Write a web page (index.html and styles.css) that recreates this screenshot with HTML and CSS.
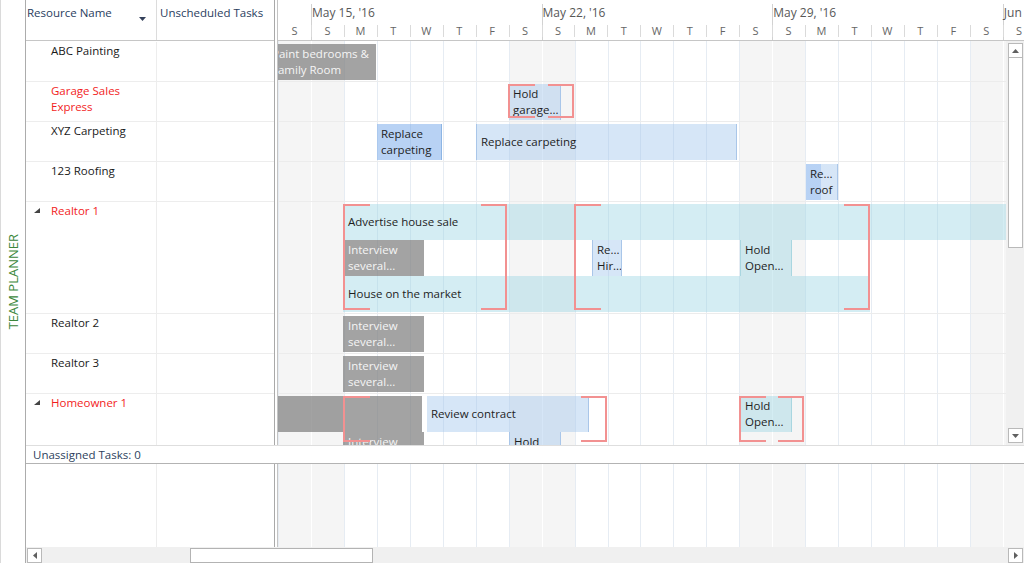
FILE: index.html
```html
<!DOCTYPE html>
<html lang="en">
<head>
<meta charset="utf-8">
<title>Team Planner</title>
<link rel="stylesheet" href="styles.css">
</head>
<body>
<div class="app">
  <aside class="side"><span class="side-label">TEAM PLANNER</span></aside>
  <div class="main">
    <div class="top">
      <div class="table">
        <div class="thead">
          <div class="th th-name">Resource Name
            <svg class="sort" width="8" height="4" viewBox="0 0 8 4"><polygon points="0,0 7,0 3.5,4" fill="#34405a"/></svg>
          </div>
          <div class="th th-uns">Unscheduled Tasks</div>
        </div>
        <div class="tbody">
          <div class="tr"><div class="td name">ABC Painting</div><div class="td uns"></div></div>
          <div class="tr"><div class="td name red">Garage Sales<br>Express</div><div class="td uns"></div></div>
          <div class="tr"><div class="td name">XYZ Carpeting</div><div class="td uns"></div></div>
          <div class="tr"><div class="td name">123 Roofing</div><div class="td uns"></div></div>
          <div class="tr tall"><div class="td name red"><svg class="twisty" width="6" height="6" viewBox="0 0 6 6"><polygon points="6,0 6,5 0,5" fill="#444"/></svg>Realtor 1</div><div class="td uns"></div></div>
          <div class="tr"><div class="td name">Realtor 2</div><div class="td uns"></div></div>
          <div class="tr"><div class="td name">Realtor 3</div><div class="td uns"></div></div>
          <div class="tr last"><div class="td name red"><svg class="twisty" width="6" height="6" viewBox="0 0 6 6"><polygon points="6,0 6,5 0,5" fill="#444"/></svg>Homeowner 1</div><div class="td uns"></div></div>
        </div>
      </div>
      <div class="splitter"></div>
      <div class="chart">
        <div class="chead">
          <div class="months">
            <div class="m-lead"></div>
            <div class="month">May 15, '16</div>
            <div class="month">May 22, '16</div>
            <div class="month">May 29, '16</div>
            <div class="month">Jun</div>
          </div>
          <div class="days">
            <div class="day">S</div>
            <div class="day wk">S</div><div class="day">M</div><div class="day">T</div><div class="day">W</div><div class="day">T</div><div class="day">F</div><div class="day">S</div>
            <div class="day wk">S</div><div class="day">M</div><div class="day">T</div><div class="day">W</div><div class="day">T</div><div class="day">F</div><div class="day">S</div>
            <div class="day wk">S</div><div class="day">M</div><div class="day">T</div><div class="day">W</div><div class="day">T</div><div class="day">F</div><div class="day">S</div>
            <div class="day wk">S</div>
          </div>
        </div>
        <div class="cbody">
          <div class="canvas grid-bg">
            <div class="crow">
              <div class="bar gray" style="left:-11px;width:109px;top:2px">Paint bedrooms &amp;<br>Family Room</div>
            </div>
            <div class="crow">
              <div class="bar blue" style="left:231px;width:52px;top:2px">Hold<br>garage...</div>
              <div class="bracket" style="left:230px;width:66px;top:2px;height:34px"></div>
            </div>
            <div class="crow">
              <div class="bar dblue" style="left:99px;width:65px;top:2px">Replace<br>carpeting</div>
              <div class="bar blue lb one" style="left:198px;width:261px;top:2px">Replace carpeting</div>
            </div>
            <div class="crow">
              <div class="bar split" style="left:528px;width:32px;top:2px">Re...<br>roof</div>
            </div>
            <div class="crow tall">
              <div class="bar teal one" style="left:65px;width:720px;top:2px">Advertise house sale</div>
              <div class="bar gray" style="left:65px;width:81px;top:38px">Interview<br>several...</div>
              <div class="bar blue lb" style="left:314px;width:30px;top:38px">Re...<br>Hir...</div>
              <div class="bar teal tb" style="left:462px;width:52px;top:38px">Hold<br>Open...</div>
              <div class="bar teal one" style="left:65px;width:527px;top:74px">House on the market</div>
              <div class="bracket" style="left:65px;width:164px;top:2px;height:106px"></div>
              <div class="bracket" style="left:296px;width:296px;top:2px;height:106px"></div>
            </div>
            <div class="crow">
              <div class="bar gray" style="left:65px;width:81px;top:2px">Interview<br>several...</div>
            </div>
            <div class="crow">
              <div class="bar gray" style="left:65px;width:81px;top:2px">Interview<br>several...</div>
            </div>
            <div class="crow last">
              <div class="bar gray" style="left:-10px;width:154px;top:2px"></div>
              <div class="bar blue one" style="left:149px;width:162px;top:2px">Review contract</div>
              <div class="bar teal tb" style="left:462px;width:52px;top:2px">Hold<br>Open...</div>
              <div class="bar gray" style="left:65px;width:81px;top:38px">Interview<br>several...</div>
              <div class="bar blue lb" style="left:231px;width:52px;top:38px">Hold<br>garage...</div>
              <div class="bracket" style="left:65px;width:264px;top:2px;height:46px"></div>
              <div class="bracket" style="left:461px;width:65px;top:2px;height:46px"></div>
            </div>
          </div>
          <div class="vscroll">
            <div class="sbtn"><svg width="7" height="4" viewBox="0 0 7 4"><polygon points="0,4 7,4 3.5,0" fill="#606060"/></svg></div>
            <div class="vthumb"></div>
            <div class="sbtn down"><svg width="7" height="4" viewBox="0 0 7 4"><polygon points="0,0 7,0 3.5,4" fill="#606060"/></svg></div>
          </div>
        </div>
      </div>
    </div>
    <div class="unassigned">Unassigned Tasks: 0</div>
    <div class="bottom">
      <div class="btable"><div class="bname"></div><div class="buns"></div></div>
      <div class="splitter"></div>
      <div class="bcanvas grid-bg"></div>
    </div>
    <div class="hscroll">
      <div class="sbtn"><svg width="4" height="7" viewBox="0 0 4 7"><polygon points="4,0 4,7 0,3.5" fill="#606060"/></svg></div>
      <div class="hthumb"></div>
      <div class="sbtn right"><svg width="4" height="7" viewBox="0 0 4 7"><polygon points="0,0 0,7 4,3.5" fill="#606060"/></svg></div>
    </div>
  </div>
</div>
</body>
</html>
```

FILE: styles.css
```css
* { box-sizing: border-box; }
html, body { margin: 0; padding: 0; }
body {
  width: 1024px;
  height: 563px;
  overflow: hidden;
  background: #fff;
  font-family: "Open Sans", "Noto Sans", sans-serif;
  font-size: 11.5px;
  color: #1a1a1a;
}
.app { display: flex; height: 563px; }

.side {
  width: 26px;
  flex: none;
  border-left: 1px solid #dadada;
  border-right: 1px solid #acacac;
  display: flex;
  align-items: center;
  justify-content: center;
}
.side-label {
  writing-mode: vertical-rl;
  transform: rotate(180deg);
  font-size: 13px;
  color: #3b873b;
  white-space: nowrap;
}

.main { flex: 1; min-width: 0; display: flex; flex-direction: column; }
.top { height: 445px; flex: none; display: flex; }

/* left table */
.table { width: 248px; flex: none; display: flex; flex-direction: column; }
.thead { height: 41px; flex: none; display: flex; border-bottom: 1px solid #c6c6c6; }
.th { color: #2a3d5e; padding-top: 5px; line-height: 16px; white-space: nowrap; }
.th-name { width: 131px; padding-left: 1px; border-right: 1px solid #dcdcdc; position: relative; }
.sort { position: absolute; left: 113px; top: 17px; }
.th-uns { flex: 1; padding-left: 3px; }
.tbody { flex: 1; padding-top: 1px; overflow: hidden; }
.tr { display: flex; height: 40px; border-bottom: 1px solid #ededed; }
.tr.tall { height: 112px; }
.tr.last { height: 60px; border-bottom: none; }
.td { line-height: 16px; padding-top: 1px; white-space: nowrap; }
.td.name { width: 131px; padding-left: 25px; border-right: 1px solid #ededed; position: relative; }
.td.uns { flex: 1; }
.red { color: #f21d1d; }
.twisty { position: absolute; left: 8px; top: 6px; }

.splitter {
  width: 4px;
  flex: none;
  border-left: 1px solid #a9a9a9;
  border-right: 1px solid #c4c4c4;
  background: #fff;
}

/* chart */
.chart { flex: 1; min-width: 0; display: flex; flex-direction: column; }
.chead { height: 41px; flex: none; overflow: hidden; border-bottom: 1px solid #c6c6c6; }
.months { display: flex; height: 20px; }
.m-lead { width: 32.95px; flex: none; }
.month {
  width: 230.65px;
  flex: none;
  margin-top: 4px;
  height: 16px;
  padding-left: 1px;
  box-shadow: inset 1px 0 0 #d2d2d2;
  font-size: 12px;
  line-height: 18px;
  color: #575757;
  white-space: nowrap;
}
.days { display: flex; height: 20px; }
.day {
  width: 32.95px;
  flex: none;
  position: relative;
  text-align: center;
  font-size: 11px;
  line-height: 22px;
  color: #666;
}
.day::before {
  content: "";
  position: absolute;
  left: 0;
  top: 5px;
  bottom: 3px;
  width: 1px;
  background: #dadada;
}
.day.wk { box-shadow: inset 1px 0 0 #d2d2d2; }
.day:first-child::before { display: none; }

.cbody { flex: 1; min-height: 0; display: flex; }
.grid-bg {
  background-color: #fff;
  background-image:
    repeating-linear-gradient(90deg, transparent 0 1px, #f5f5f5 1px 32.95px, #ffffff 32.95px 33.95px, #f5f5f5 33.95px 65.9px, transparent 65.9px 230.65px),
    repeating-linear-gradient(90deg, #e6ecf3 0 1px, transparent 1px 32.95px);
}
.canvas { flex: 1; min-width: 0; overflow: hidden; padding-top: 1px; }
.crow { position: relative; height: 40px; border-bottom: 1px solid #ececec; }
.crow.tall { height: 112px; }
.crow.last { height: 60px; border-bottom: none; }

.bar {
  position: absolute;
  height: 36px;
  padding: 2px 2px 0 4px;
  line-height: 16px;
  white-space: nowrap;
  overflow: hidden;
  color: #1e1e1e;
}
.bar.one { padding-top: 0; line-height: 36px; }
.gray { background: rgba(128, 128, 128, 0.72); color: #f5f5f5; padding-left: 5px; }
.blue { background: rgba(160, 196, 236, 0.43); border-right: 1px solid #a9c6e9; }
.blue.lb { border-left: 1px solid #a9c6e9; }
.dblue { background: rgba(120, 170, 235, 0.53); border-right: 1px solid #8db5e4; }
.teal { background: rgba(160, 215, 228, 0.45); padding-left: 5px; }
.teal.tb { border-left: 1px solid #a9d6e0; border-right: 1px solid #a9d6e0; padding-left: 4px; }
.split {
  background: linear-gradient(90deg, rgba(120, 170, 235, 0.53) 0 15px, rgba(160, 196, 236, 0.43) 15px);
  border-right: 1px solid #a9c6e9;
}
.bracket { position: absolute; pointer-events: none; }
.bracket::before,
.bracket::after {
  content: "";
  position: absolute;
  top: 0;
  bottom: 0;
  border: 2px solid #f29191;
}
.bracket::before { left: 0; width: 25px; border-right: none; }
.bracket::after { right: 0; width: 24px; border-left: none; }

/* scrollbars */
.vscroll {
  width: 18px;
  flex: none;
  background: #f0f0f0;
  display: flex;
  flex-direction: column;
  align-items: flex-start;
  padding: 2px 0 2px 2px;
}
.sbtn {
  width: 15px;
  height: 15px;
  flex: none;
  border: 1px solid #b9b9b9;
  background: #fff;
  display: flex;
  align-items: center;
  justify-content: center;
}
.vthumb {
  width: 15px;
  height: 191px;
  margin-top: -1px;
  border: 1px solid #b9b9b9;
  background: #fff;
}
.sbtn.down { margin-top: auto; }

.unassigned {
  height: 19px;
  flex: none;
  border-top: 1px solid #dedede;
  border-bottom: 1px solid #b3b3b3;
  padding-left: 7px;
  line-height: 17px;
  color: #2d3f5d;
}

.bottom { height: 83px; flex: none; display: flex; }
.btable { width: 248px; flex: none; display: flex; }
.bname { width: 131px; border-right: 1px solid #ededed; }
.buns { flex: 1; }
.bcanvas { flex: 1; }

.hscroll {
  height: 16px;
  flex: none;
  background: #f0f0f0;
  display: flex;
  align-items: center;
  padding: 0 1px 0 1px;
}
.hthumb {
  width: 183px;
  height: 15px;
  margin-left: 148px;
  border: 1px solid #b3b3b3;
  background: #fff;
}
.sbtn.right { margin-left: auto; }
```
